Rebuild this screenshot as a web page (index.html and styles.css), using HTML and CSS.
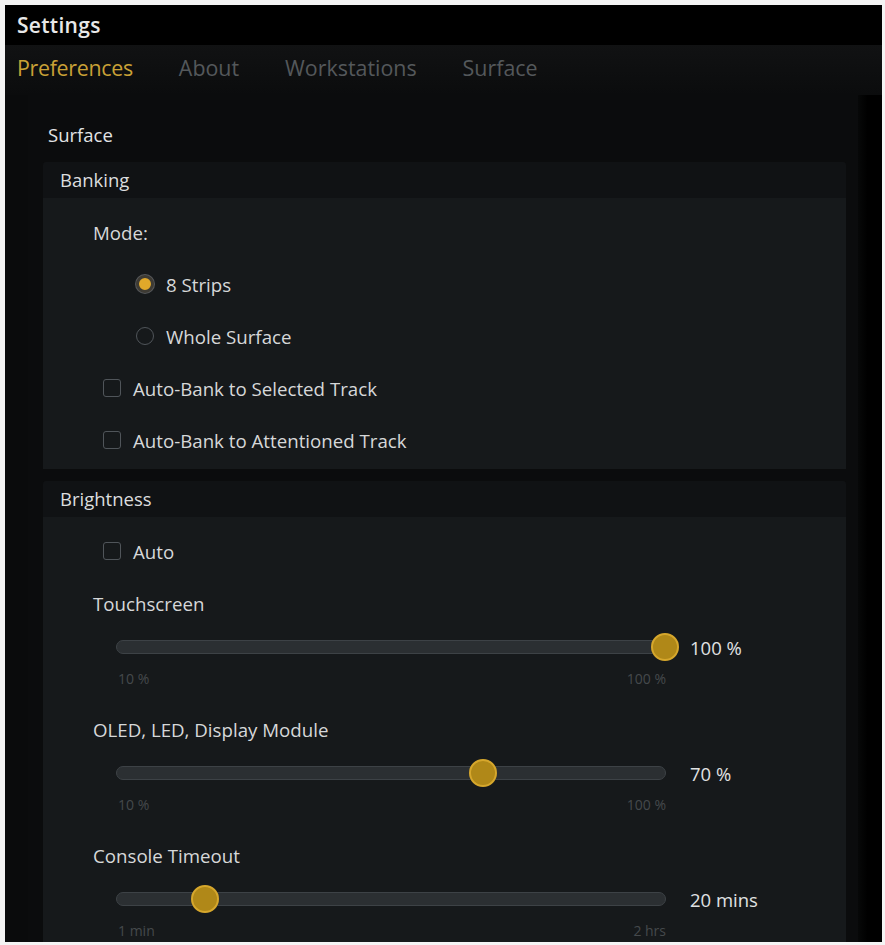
FILE: index.html
```html
<!DOCTYPE html>
<html>
<head>
<meta charset="utf-8">
<link rel="stylesheet" href="styles.css">
</head>
<body>
<div class="window">
  <div class="titlebar">Settings</div>
  <div class="tabs">
    <span class="tab active">Preferences</span>
    <span class="tab">About</span>
    <span class="tab">Workstations</span>
    <span class="tab">Surface</span>
  </div>
  <div class="main">
    <div class="scroll">
      <div class="section-title">Surface</div>

      <div class="group">
        <div class="group-head">Banking</div>
        <div class="group-body banking">
          <div class="row label">Mode:</div>
          <div class="row radio-row"><span class="radio on"></span><span>8 Strips</span></div>
          <div class="row radio-row"><span class="radio"></span><span>Whole Surface</span></div>
          <div class="row check-row"><span class="check"></span><span>Auto-Bank to Selected Track</span></div>
          <div class="row check-row"><span class="check"></span><span>Auto-Bank to Attentioned Track</span></div>
        </div>
      </div>

      <div class="group">
        <div class="group-head">Brightness</div>
        <div class="group-body brightness">
          <div class="row check-row"><span class="check"></span><span>Auto</span></div>

          <div class="slider-block">
            <div class="row label">Touchscreen</div>
            <div class="slider-row">
              <div class="track"><span class="thumb" style="left:100%"></span></div>
              <span class="value">100 %</span>
            </div>
            <div class="ticks"><span>10 %</span><span>100 %</span></div>
          </div>

          <div class="slider-block">
            <div class="row label">OLED, LED, Display Module</div>
            <div class="slider-row">
              <div class="track"><span class="thumb" style="left:66.7%"></span></div>
              <span class="value">70 %</span>
            </div>
            <div class="ticks"><span>10 %</span><span>100 %</span></div>
          </div>

          <div class="slider-block">
            <div class="row label">Console Timeout</div>
            <div class="slider-row">
              <div class="track"><span class="thumb" style="left:16%"></span></div>
              <span class="value">20 mins</span>
            </div>
            <div class="ticks"><span>1 min</span><span>2 hrs</span></div>
          </div>
        </div>
      </div>
    </div>
    <div class="gutter"></div>
  </div>
</div>
</body>
</html>
```

FILE: styles.css
```css
* { box-sizing: border-box; }
html, body { margin: 0; padding: 0; }
body {
  background: #f4f4f4;
  width: 885px;
  height: 945px;
  overflow: hidden;
  font-family: "Open Sans", "Noto Sans", sans-serif;
  color: #d6d8d9;
}
.window {
  margin: 5px 3px 0 5px;
  width: 877px;
  height: 937px;
  background: #0a0b0c;
  display: flex;
  flex-direction: column;
  overflow: hidden;
}
.titlebar {
  height: 40px;
  flex: none;
  background: #000;
  color: #e8e8e8;
  font-size: 21px;
  font-weight: 600;
  line-height: 40px;
  padding-left: 12px;
  letter-spacing: 0.3px;
}
.tabs {
  height: 50px;
  flex: none;
  display: flex;
  align-items: center;
  gap: 46px;
  padding: 0 0 5px 12px;
  background: linear-gradient(#111213, #0b0c0d);
  font-size: 21.4px;
}
.tab { color: #54585b; letter-spacing: 0; }
.tab.active { color: #c9a136; letter-spacing: -0.3px; }
.main {
  flex: 1;
  display: flex;
  min-height: 0;
}
.scroll {
  flex: 1;
  margin-left: 23px;
  padding: 25px 12px 0 15px;
  background: #0b0c0d;
}
.gutter {
  width: 24px;
  flex: none;
  background: linear-gradient(90deg, #070808, #000 40%);
}
.section-title {
  height: 30px;
  line-height: 30px;
  font-size: 18.5px;
  padding-left: 5px;
  color: #e2e4e5;
  margin-bottom: 12px;
}
.group { margin-bottom: 12px; }
.group-head {
  height: 36px;
  line-height: 36px;
  background: #101214;
  font-size: 18.5px;
  padding-left: 17px;
  color: #dcdedf;
  border-radius: 3px 3px 0 0;
}
.group-body {
  background: #16191b;
  padding-left: 50px;
}
.group-body.banking { padding-top: 8px; padding-bottom: 3px; }
.group-body.brightness { padding-top: 8px; min-height: 430px; }
.row {
  height: 52px;
  display: flex;
  align-items: center;
  font-size: 18.7px;
}
.radio-row { padding-left: 43px; gap: 12px; }
.check-row { padding-left: 10px; gap: 12px; }
.radio {
  width: 18px;
  height: 18px;
  border-radius: 50%;
  border: 1.5px solid #50555a;
  flex: none;
}
.radio.on {
  background: #e0a82a;
  border: 3px solid #3d3a33;
  box-shadow: 0 0 0 1px #55575a;
}
.check {
  width: 18px;
  height: 18px;
  border-radius: 3px;
  border: 1.5px solid #50555a;
  flex: none;
}
.slider-block { margin-bottom: 12px; }
.slider-row {
  height: 36px;
  display: flex;
  align-items: center;
  padding-left: 23px;
}
.track {
  position: relative;
  width: 550px;
  height: 14px;
  border-radius: 7px;
  background: #2b2f32;
  border: 1px solid #3d4246;
  flex: none;
}
.thumb {
  position: absolute;
  top: 50%;
  width: 28px;
  height: 28px;
  margin: -14px 0 0 -14px;
  border-radius: 50%;
  background: #b08818;
  border: 2px solid #d6a72c;
}
.value {
  margin-left: 24px;
  font-size: 18.5px;
  color: #e0e2e3;
}
.ticks {
  height: 26px;
  width: 573px;
  padding-left: 25px;
  display: flex;
  justify-content: space-between;
  align-items: center;
  font-size: 14px;
  color: #45494c;
}
```
